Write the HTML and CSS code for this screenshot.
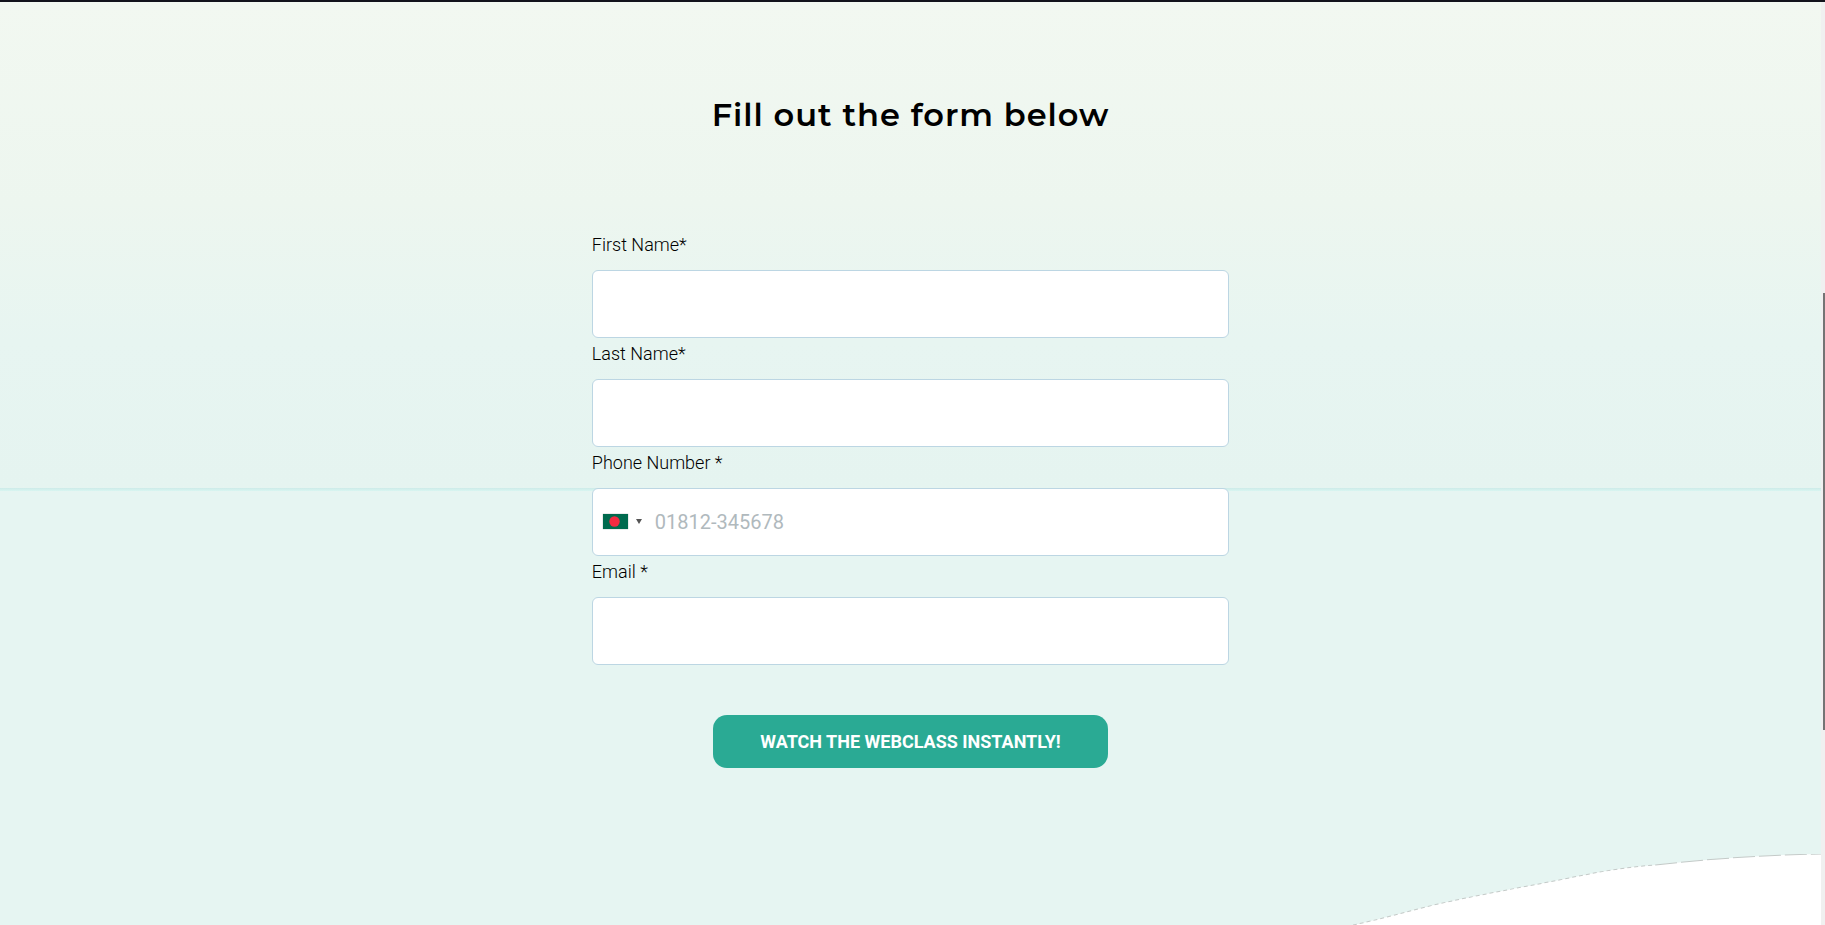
FILE: index.html
```html
<!DOCTYPE html>
<html lang="en">
<head>
  <meta charset="UTF-8">
  <meta name="viewport" content="width=device-width, initial-scale=1.0">
  <title>Webclass Registration</title>
  <link rel="stylesheet" href="styles.css">
</head>
<body>
  <div class="page">
    <main class="signup">
      <h1 class="signup__title">Fill out the form below</h1>
      <form class="form" action="#" method="post">
        <label class="form__label" for="first-name">First Name*</label>
        <input class="form__input" type="text" id="first-name" name="first_name" required>

        <label class="form__label" for="last-name">Last Name*</label>
        <input class="form__input" type="text" id="last-name" name="last_name" required>

        <label class="form__label" for="phone">Phone Number *</label>
        <div class="phone">
          <button class="phone__country" type="button" aria-label="Bangladesh">
            <svg class="phone__flag" viewBox="0 0 25 15" aria-hidden="true">
              <rect width="25" height="15" fill="#006a4e"/>
              <circle cx="11.5" cy="7.5" r="5.2" fill="#f42a41"/>
            </svg>
            <span class="phone__arrow"></span>
          </button>
          <input class="form__input phone__input" type="tel" id="phone" name="phone" placeholder="01812-345678" required>
        </div>

        <label class="form__label" for="email">Email *</label>
        <input class="form__input" type="email" id="email" name="email" required>

        <button class="form__submit" type="submit">WATCH THE WEBCLASS INSTANTLY!</button>
      </form>
    </main>
    <svg class="wave" viewBox="0 0 473 71" preserveAspectRatio="none" aria-hidden="true">
      <path d="M5 71C30 66 60 57 90 50C130 41 170 34 211 26C245 19 275 13 307 11C350 6 410 1 473 0V71Z" fill="#fff"/>
      <path class="wave__edge" d="M5 71C30 66 60 57 90 50C130 41 170 34 211 26C245 19 275 13 307 11"/>
      <path class="wave__edge wave__edge--long" d="M307 11C350 6 410 1 473 0"/>
    </svg>
  </div>
  <div class="scrollbar"><div class="scrollbar__thumb"></div></div>
</body>
</html>
```
FILE: styles.css
```css
* {
  box-sizing: border-box;
}

body {
  display: flex;
  min-height: 100vh;
  margin: 0;
  border-top: 2px solid #12131c;
  font-family: Roboto, Arial, sans-serif;
  color: #000;
}

/* Page background: upper fade, thin seam, flat lower part */
.page {
  display: flex;
  flex: 1;
  flex-direction: column;
  background:
    linear-gradient(#cdebe8, #d8f5f1) 0 486px / 100% 3px no-repeat,
    linear-gradient(#f2f8f1, #edf6ef 200px, #e7f5f1 340px, #e5f4f0) 0 0 / 100% 486px no-repeat,
    #e6f5f2;
}

.signup {
  flex: 1;
  padding: 92px 0 79px;
}

.signup__title {
  margin: 0 0 93px;
  font-family: Montserrat, Inter, sans-serif;
  font-size: 32px;
  font-weight: 600;
  line-height: 42px;
  letter-spacing: 1px;
  text-align: center;
}

/* Form */
.form {
  display: flex;
  flex-direction: column;
  width: 35%;
  min-width: 280px;
  margin: 0 auto;
}

.form__label {
  padding: 4px 0 13px;
  font-size: 18px;
  font-weight: 300;
  line-height: 24px;
}

.form__input {
  width: 100%;
  height: 68px;
  padding: 0 16px;
  border: 1px solid #bcd6e3;
  border-radius: 6px;
  background: #fff;
  font-family: inherit;
  font-size: 20px;
}

.form__input::placeholder {
  color: #b0b9bd;
  opacity: 1;
}

.phone {
  position: relative;
}

.phone__country {
  position: absolute;
  top: 0;
  bottom: 2px;
  left: 1px;
  display: flex;
  align-items: center;
  gap: 8px;
  padding: 0 10px;
  border: 0;
  background: transparent;
  cursor: pointer;
}

.phone__flag {
  width: 25px;
  height: 15px;
  box-shadow: 0 0 1px #888;
}

.phone__arrow {
  border-top: 5px solid #555;
  border-right: 3px solid transparent;
  border-left: 3px solid transparent;
}

.phone__input {
  padding-left: 62px;
}

.form__submit {
  align-self: center;
  height: 53px;
  margin-top: 50px;
  padding: 0 47px;
  border: 0;
  border-radius: 14px;
  background: #2aaa94;
  color: #fff;
  font-family: inherit;
  font-size: 18px;
  font-weight: 700;
  cursor: pointer;
}

/* Bottom corner */
.wave {
  align-self: flex-end;
  width: 26%;
  height: 71px;
}

.wave__edge {
  fill: none;
  stroke: #c4cac8;
  stroke-width: 1;
  stroke-dasharray: 4 3;
}

.wave__edge--long {
  stroke-dasharray: 22 4;
}

/* Scrollbar */
.scrollbar {
  width: 4px;
  padding: 291px 0 0 2px;
  background: #f0f0f0;
}

.scrollbar__thumb {
  height: 437px;
  background: #747474;
}
```
